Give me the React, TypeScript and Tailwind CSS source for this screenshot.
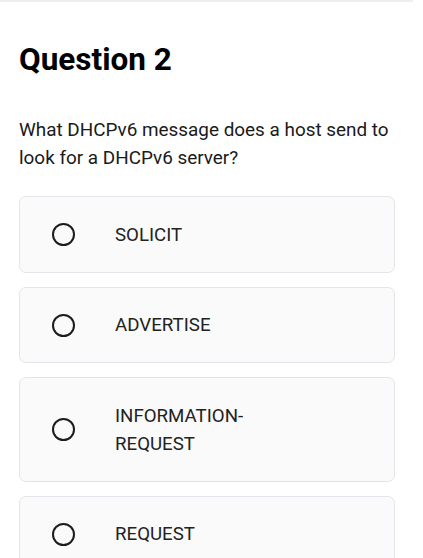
const options = ["SOLICIT", "ADVERTISE", "INFORMATION-REQUEST", "REQUEST"];

export default function App() {
  return (
    <div
      className="min-h-screen bg-white text-[#111]"
      style={{ fontFamily: "Roboto, 'Liberation Sans', sans-serif" }}
    >
      <div className="h-[2px] w-[413px] bg-[#eeeeee]" />
      <div className="px-[19px] pr-[28px]">
        <h1 className="mt-[38px] text-[31.5px] font-bold leading-[40px] text-black">
          Question 2
        </h1>
        <p className="mt-[36px] text-[18.9px] leading-[28px] text-[#1a1a1a]">
          What DHCPv6 message does a host send to look for a DHCPv6 server?
        </p>
        <div className="mt-[24px] flex flex-col gap-[14px]">
          {options.map((opt) => (
            <div
              key={opt}
              className="flex items-center rounded-[7px] border border-[#e3e5ea] bg-[#fafafa] pt-[23.5px] pb-[23px] pl-[32px]"
            >
              <span className="h-[23px] w-[23px] shrink-0 rounded-full border-[2.5px] border-[#1c1c1c]" />
              <span className="ml-[40px] w-[170px] text-[18.7px] leading-[28px] text-[#222]">
                {opt}
              </span>
            </div>
          ))}
        </div>
      </div>
    </div>
  );
}
